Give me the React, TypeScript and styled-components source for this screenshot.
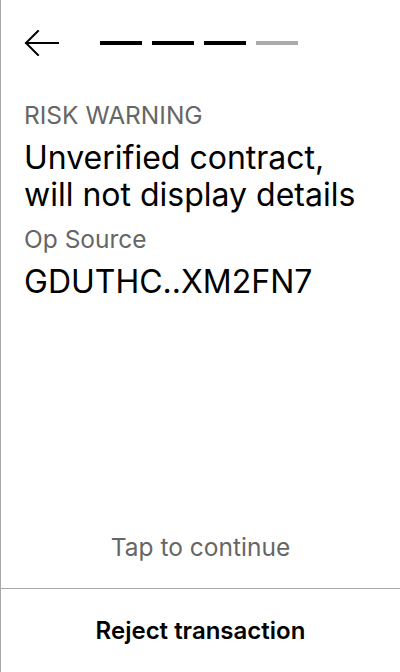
import * as React from "react";
import styled, { createGlobalStyle } from "styled-components";

const Global = createGlobalStyle`
  html, body {
    margin: 0;
    padding: 0;
    background: #fff;
  }
  body {
    font-family: Inter, "Noto Sans", sans-serif;
    color: #000;
  }
`;

const Screen = styled.div`
  width: 400px;
  height: 672px;
  box-sizing: border-box;
  border-left: 1px solid #a8a8a8;
  display: flex;
  flex-direction: column;
`;

const Header = styled.div`
  display: flex;
  align-items: center;
  gap: 41px;
  padding: 30px 0 0 23px;
  height: 26px;
`;

const BackButton = styled.button`
  border: 0;
  background: none;
  padding: 0;
  width: 35px;
  height: 26px;
  display: flex;
  cursor: pointer;
`;

const Steps = styled.div`
  display: flex;
  gap: 10px;
`;

const Step = styled.div<{ $done: boolean }>`
  width: 42px;
  height: 4px;
  background: ${(p) => (p.$done ? "#000" : "#aaaaaa")};
`;

const Body = styled.div`
  flex: 1;
  padding: 45px 20px 0 23px;
  display: flex;
  flex-direction: column;
`;

const Label = styled.div`
  font-size: 24.5px;
  line-height: 28px;
  color: #666;
  margin-bottom: 10px;
`;

const Value = styled.div`
  font-size: 32px;
  line-height: 37px;
  color: #000;
  margin-bottom: 12px;
`;

const Hint = styled.div`
  text-align: center;
  font-size: 24.5px;
  line-height: 28px;
  color: #666;
  padding-bottom: 27px;
`;

const Divider = styled.hr`
  margin: 0;
  border: 0;
  border-top: 1px solid #a8a8a8;
`;

const Reject = styled.button`
  height: 83px;
  border: 0;
  background: none;
  font-family: inherit;
  font-size: 24px;
  font-weight: 600;
  color: #000;
  cursor: pointer;
`;

const steps = [true, true, true, false];

export default function App() {
  return (
    <>
      <Global />
      <Screen>
        <Header>
          <BackButton aria-label="Back">
            <svg width="35" height="26" viewBox="0 0 35 26" fill="none">
              <path
                d="M34 13H2M14 1L2 13L14 25"
                stroke="#000"
                strokeWidth="2"
                strokeLinecap="square"
              />
            </svg>
          </BackButton>
          <Steps>
            {steps.map((done, i) => (
              <Step key={i} $done={done} />
            ))}
          </Steps>
        </Header>
        <Body>
          <Label>RISK WARNING</Label>
          <Value>Unverified contract, will not display details</Value>
          <Label>Op Source</Label>
          <Value>GDUTHC..XM2FN7</Value>
        </Body>
        <Hint>Tap to continue</Hint>
        <Divider />
        <Reject>Reject transaction</Reject>
      </Screen>
    </>
  );
}
